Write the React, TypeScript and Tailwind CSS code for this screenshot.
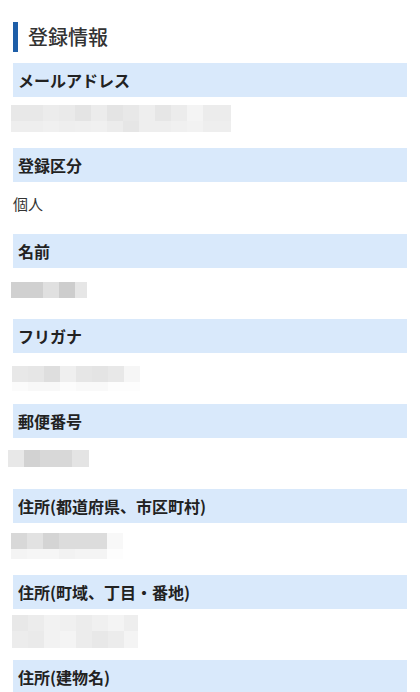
import React from "react";

type Row = { h: number; cells: [number, string][] };

function Blur({ className, rows }: { className: string; rows: Row[] }) {
  return (
    <div className={"flex flex-col " + className}>
      {rows.map((r, i) => (
        <div key={i} className="flex">
          {r.cells.map(([w, c], j) => (
            <div key={j} style={{ width: w, height: r.h, background: c }} />
          ))}
        </div>
      ))}
    </div>
  );
}

function Label({ children }: { children: React.ReactNode }) {
  return (
    <div className="h-[34px] bg-[#d9e9fb] flex items-center pl-[5px] text-[16px] font-bold text-[#222] leading-none">
      {children}
    </div>
  );
}

function Value({ children, className }: { children: React.ReactNode; className: string }) {
  return <div className={"h-[51.3px] " + className}>{children}</div>;
}

export default function App() {
  return (
    <div className="w-[420px] h-[692px] overflow-hidden bg-white px-[13px] pt-[22px] font-['Noto_Sans_CJK_JP','Noto_Sans',sans-serif]">
      <div className="flex items-center h-[30px] border-l-[5px] border-[#1e5ea8] pl-[10px] mb-[11px]">
        <span className="text-[20px] font-medium text-[#333] leading-none">登録情報</span>
      </div>

      <Label>メールアドレス</Label>
      <Value className="pt-[8px]">
        <Blur
          className="-ml-[2px]"
          rows={[
            {
              h: 16,
              cells: [
                [32, "#e8e8e8"], [16, "#ececec"], [16, "#eaeaea"], [16, "#e4e4e4"], [16, "#ececec"],
                [16, "#e4e4e4"], [16, "#e8e8e8"], [16, "#eeeeee"], [16, "#e6e6e6"], [16, "#ececec"],
                [16, "#f4f4f4"], [28, "#ececec"],
              ],
            },
            {
              h: 11,
              cells: [
                [32, "#eeeeee"], [16, "#f0f0f0"], [16, "#eeeeee"], [16, "#efefef"], [16, "#f0f0f0"],
                [16, "#ececec"], [16, "#e6e6e6"], [16, "#eeeeee"], [16, "#eeeeee"], [16, "#f0f0f0"],
                [16, "#f2f2f2"], [28, "#eeeeee"],
              ],
            },
          ]}
        />
      </Value>

      <Label>登録区分</Label>
      <Value className="pt-[11px]">
        <div className="text-[15px] text-[#333] leading-[22px]">個人</div>
      </Value>

      <Label>名前</Label>
      <Value className="pt-[14px]">
        <Blur
          className="-ml-[2px]"
          rows={[{ h: 16, cells: [[32, "#d0d0d0"], [16, "#e0e0e0"], [16, "#cdcdcd"], [12, "#e6e6e6"]] }]}
        />
      </Value>

      <Label>フリガナ</Label>
      <Value className="pt-[13px]">
        <Blur
          className="-ml-[1px]"
          rows={[
            {
              h: 16,
              cells: [
                [16, "#e8e8e8"], [16, "#e6e6e6"], [16, "#dedede"], [16, "#efefef"],
                [16, "#e6e6e6"], [16, "#e4e4e4"], [16, "#e8e8e8"], [16, "#f6f6f6"],
              ],
            },
            {
              h: 9,
              cells: [[16, "#fbfbfb"], [32, "#f8f8f8"], [16, "#fcfcfc"], [32, "#f9f9f9"], [32, "#fdfdfd"]],
            },
          ]}
        />
      </Value>

      <Label>郵便番号</Label>
      <Value className="pt-[12px]">
        <Blur
          className="-ml-[5px]"
          rows={[{ h: 17, cells: [[16, "#e8e8e8"], [16, "#d2d2d2"], [32, "#d8d8d8"], [17, "#e4e4e4"]] }]}
        />
      </Value>

      <Label>住所(都道府県、市区町村)</Label>
      <Value className="pt-[10px]">
        <Blur
          className="-ml-[2px]"
          rows={[
            {
              h: 16,
              cells: [[16, "#d8d8d8"], [16, "#e2e2e2"], [16, "#d4d4d4"], [48, "#dcdcdc"], [16, "#f8f8f8"]],
            },
            {
              h: 10,
              cells: [[16, "#f4f4f4"], [32, "#f6f6f6"], [16, "#f2f2f2"], [32, "#f4f4f4"], [16, "#fdfdfd"]],
            },
          ]}
        />
      </Value>

      <Label>住所(町域、丁目・番地)</Label>
      <Value className="pt-[6px]">
        <Blur
          className="-ml-[1px]"
          rows={[
            {
              h: 16,
              cells: [
                [16, "#e8e8e8"], [16, "#ececec"], [16, "#f2f2f2"], [16, "#f0f0f0"],
                [16, "#ececec"], [16, "#f0f0f0"], [16, "#f4f4f4"], [14, "#eeeeee"],
              ],
            },
            {
              h: 17,
              cells: [
                [16, "#ececec"], [16, "#eaeaea"], [16, "#f2f2f2"], [16, "#f4f4f4"],
                [16, "#ececec"], [16, "#e8e8e8"], [16, "#ececec"], [14, "#f4f4f4"],
              ],
            },
          ]}
        />
      </Value>

      <Label>住所(建物名)</Label>
    </div>
  );
}
